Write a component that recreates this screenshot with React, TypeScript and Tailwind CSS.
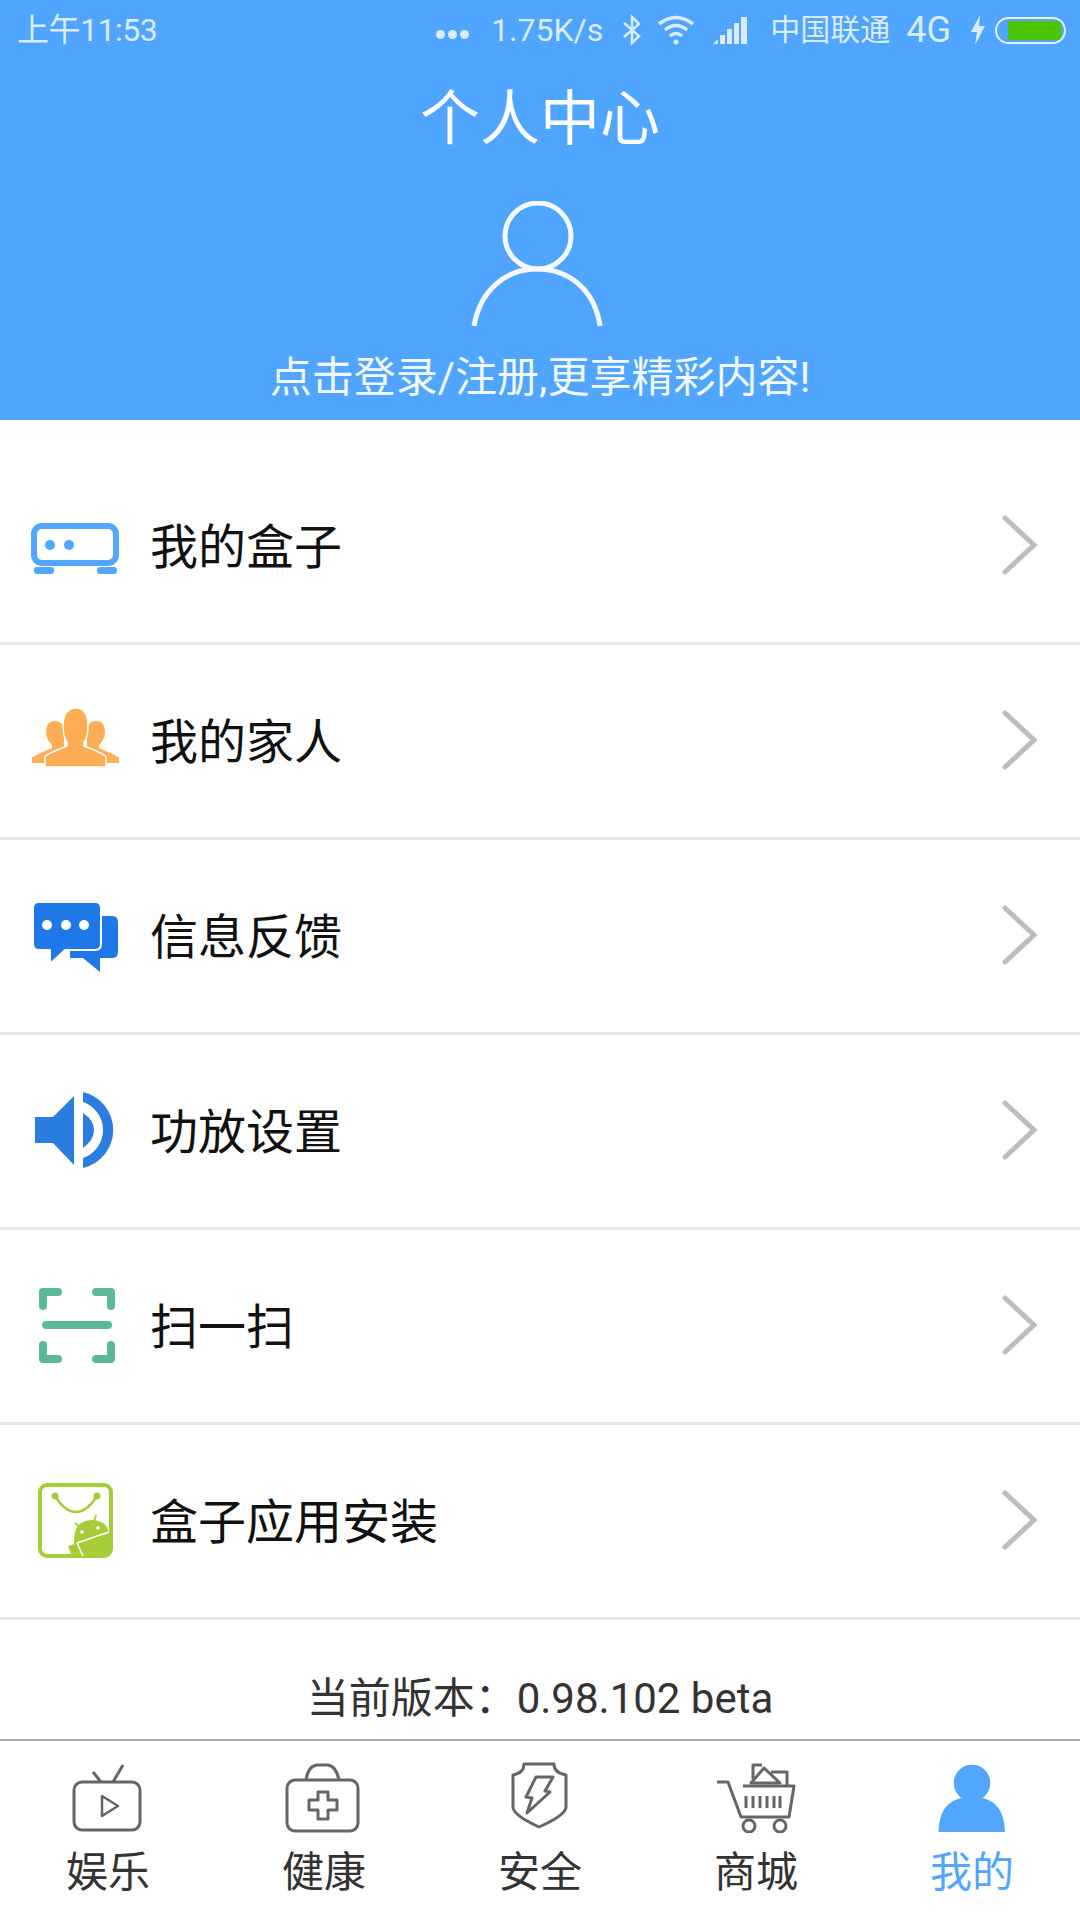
import type { ReactNode } from "react";

const BoxIcon = () => (
  <svg viewBox="0 0 100 100" className="w-[100px] h-[100px] shrink-0 mt-[2px]" fill="#52a6ff">
    <rect x="9" y="29" width="82" height="37" rx="8" fill="none" stroke="#52a6ff" strokeWidth="6" />
    <circle cx="25" cy="48" r="5" />
    <circle cx="44" cy="48" r="5" />
    <rect x="9" y="70" width="20" height="7" rx="3" />
    <rect x="72" y="70" width="20" height="7" rx="3" />
  </svg>
);

const FamilyIcon = () => (
  <svg viewBox="0 0 100 100" className="w-[100px] h-[100px] shrink-0 mt-[2px]" fill="#ffae55">
    <path d="M7 71 V66 Q8 64 27 56 V53 Q21 48 21 38 Q22 29 30 29 Q38 29 39 38 V60 L30 71 Z" />
    <path d="M94 71 V66 Q93 64 74 56 V53 Q80 48 80 38 Q79 29 71 29 Q63 29 62 38 V60 L70 71 Z" />
    <path
      d="M20 75 V65 Q21 62 42 54 V50 Q38 46 38 32 Q39 16 51 16 Q62 16 63 32 Q63 46 59 50 V54 Q80 62 81 65 V75 Z"
      stroke="#ffffff"
      strokeWidth="1.5"
    />
  </svg>
);

const ChatIcon = () => (
  <svg viewBox="0 0 100 100" className="w-[100px] h-[100px] shrink-0 mt-[2px]" fill="#1f78e8">
    <path d="M45 29 H87 Q93 29 93 35 V65 Q93 71 87 71 H75 V85 L58 71 H45 Z" />
    <path
      d="M14 15 H70 Q76 15 76 21 V57 Q76 63 70 63 H40 L25 77 V63 H14 Q8 63 8 57 V21 Q8 15 14 15 Z"
      stroke="#ffffff"
      strokeWidth="2"
    />
    <circle cx="22" cy="38" r="5" fill="#ffffff" />
    <circle cx="41" cy="38" r="5" fill="#ffffff" />
    <circle cx="59" cy="38" r="5" fill="#ffffff" />
  </svg>
);

const SpeakerIcon = () => (
  <svg viewBox="0 0 100 100" className="w-[100px] h-[100px] shrink-0 mt-[2px]" fill="#2b7de0">
    <path d="M10 35 H28 L49 14 V83 L28 61 H10 Z" />
    <path d="M58 31 Q69 38 69 48 Q69 58 58 66 Z" />
    <path d="M58 10 A39 39 0 0 1 58 86 V76 A29.6 29.6 0 0 0 58 20 Z" />
  </svg>
);

const ScanIcon = () => (
  <svg
    viewBox="0 0 100 100"
    className="w-[100px] h-[100px] shrink-0 mt-[2px]"
    fill="none"
    stroke="#5cb89a"
    strokeWidth="8"
    strokeLinecap="round"
    strokeLinejoin="round"
  >
    <path d="M18 29 V15 H33" />
    <path d="M71 15 H86 V29" />
    <path d="M18 68 V82 H33" />
    <path d="M71 82 H86 V68" />
    <path d="M21 48 H83" />
  </svg>
);

const AppIcon = () => (
  <svg viewBox="0 0 100 100" className="w-[100px] h-[100px] shrink-0 mt-[2px]">
    <path d="M49 84 V67 Q50 48 67 48 Q83 49 84 62 V84 Z" fill="#a6cc38" />
    <path d="M43 74 L53 71 L59 85 H47 Z" fill="#a6cc38" />
    <rect x="15" y="13" width="71" height="71" rx="7" fill="none" stroke="#a6cc38" strokeWidth="4" />
    <path d="M30 24 Q40 40 51 40 Q62 40 72 24" fill="none" stroke="#a6cc38" strokeWidth="2.5" />
    <circle cx="30" cy="24" r="3.5" fill="#a6cc38" />
    <circle cx="72" cy="24" r="3.5" fill="#a6cc38" />
    <path d="M50 51 L55 55 M71 43 L69 50" stroke="#a6cc38" strokeWidth="2" />
    <path d="M52 71 L84 60 M52 71 L58 84" stroke="#ffffff" strokeWidth="1.5" fill="none" />
    <circle cx="57" cy="60" r="1.8" fill="#ffffff" />
    <circle cx="73" cy="56" r="1.8" fill="#ffffff" />
  </svg>
);

const Chevron = () => (
  <svg viewBox="0 0 40 64" className="w-[40px] h-[64px] ml-auto mr-[41px]" fill="none" stroke="#bdbdbd" strokeWidth="5" strokeLinecap="round">
    <path d="M6 4 L35 31 L6 58" />
  </svg>
);

const rows: { label: string; icon: ReactNode }[] = [
  { label: "我的盒子", icon: <BoxIcon /> },
  { label: "我的家人", icon: <FamilyIcon /> },
  { label: "信息反馈", icon: <ChatIcon /> },
  { label: "功放设置", icon: <SpeakerIcon /> },
  { label: "扫一扫", icon: <ScanIcon /> },
  { label: "盒子应用安装", icon: <AppIcon /> },
];

const TvNav = () => (
  <svg viewBox="0 0 80 72" className="w-[80px] h-[72px]" fill="none" stroke="#666666" strokeWidth="3" strokeLinejoin="round">
    <rect x="6" y="21" width="66" height="48" rx="8" />
    <path d="M25 11 L33 21 M55 4 L45 21" />
    <path d="M34 35 L50 45 L34 55 Z" strokeWidth="2.5" />
  </svg>
);

const HealthNav = () => (
  <svg viewBox="0 0 80 72" className="w-[80px] h-[72px]" fill="none" stroke="#666666" strokeWidth="3" strokeLinejoin="round">
    <rect x="3" y="19" width="71" height="51" rx="8" />
    <path d="M22 19 Q24 5 33 4 H44 Q52 5 55 19" />
    <path d="M34 31 H44 V39 H53 V49 H44 V58 H34 V49 H25 V39 H34 Z" />
  </svg>
);

const SafeNav = () => (
  <svg viewBox="0 0 80 72" className="w-[80px] h-[72px]" fill="none" stroke="#666666" strokeWidth="3" strokeLinejoin="round">
    <path d="M24 3 H54 Q54 12 66 14 V46 Q66 54 39 66 Q13 54 13 46 V14 Q24 12 24 3 Z" />
    <path d="M36 16 H53 L45 30 L50 31 L27 52 L32 37 L26 36 Z" />
  </svg>
);

const ShopNav = () => (
  <svg viewBox="0 0 80 72" className="w-[80px] h-[72px]" fill="none" stroke="#666666" strokeWidth="3" strokeLinejoin="round">
    <path d="M1 21 H12 L25 56 H73 L78 25 H27" />
    <circle cx="33" cy="65" r="6" />
    <circle cx="64" cy="65" r="6" />
    <path d="M30 35 V47 M37 35 V47 M44 35 V47 M51 35 V47 M58 35 V47 M64 35 V47" />
    <path d="M37 18 V4 H46" />
    <path d="M35 22 L48 7 L64 22 Z" />
    <path d="M55 11 H71 V24" />
  </svg>
);

const MeNav = () => (
  <svg viewBox="0 0 80 72" className="w-[80px] h-[72px]" fill="#52a6ff">
    <circle cx="40" cy="22" r="18.3" />
    <path d="M6.5 71 Q7 42 29 37 Q40 43 51 37 Q72 42 73 71 Z" />
  </svg>
);

const tabs: { label: string; icon: ReactNode; active?: boolean }[] = [
  { label: "娱乐", icon: <TvNav /> },
  { label: "健康", icon: <HealthNav /> },
  { label: "安全", icon: <SafeNav /> },
  { label: "商城", icon: <ShopNav /> },
  { label: "我的", icon: <MeNav />, active: true },
];

function StatusBar() {
  return (
    <div className="h-[60px] flex items-center pl-[17px] pr-[14px] text-[#d9ecff] text-[30px] leading-none">
      <span className="text-[32px] tracking-[-0.5px]">上午11:53</span>
      <span className="ml-auto flex gap-[3px] mt-[8px]">
        <span className="w-[9px] h-[9px] rounded-full bg-[#d9ecff]" />
        <span className="w-[9px] h-[9px] rounded-full bg-[#d9ecff]" />
        <span className="w-[9px] h-[9px] rounded-full bg-[#d9ecff]" />
      </span>
      <span className="ml-[22px] text-[32px]">1.75K/s</span>
      <svg viewBox="0 0 22 32" className="w-[22px] h-[32px] ml-[18px]" fill="none" stroke="#d9ecff" strokeWidth="2.5">
        <path d="M3 9 L18 22 L11 29 V3 L18 10 L3 23" />
      </svg>
      <svg viewBox="0 0 38 32" className="w-[38px] h-[32px] ml-[14px]" fill="none" stroke="#d9ecff" strokeWidth="3.5">
        <path d="M2 10 Q19 -3 36 10" />
        <path d="M8 16 Q19 7 30 16" />
        <path d="M13 22 Q19 17 25 22" />
        <circle cx="19" cy="28" r="2.5" fill="#d9ecff" stroke="none" />
      </svg>
      <svg viewBox="0 0 38 32" className="w-[38px] h-[32px] ml-[18px]" fill="#d9ecff">
        <path d="M0 30 L5 25 V30 Z" />
        <rect x="7" y="21" width="5" height="9" />
        <rect x="14" y="15" width="5" height="15" />
        <rect x="21" y="9" width="5" height="21" />
        <rect x="28" y="3" width="6" height="27" />
      </svg>
      <span className="ml-[19px]">中国联通</span>
      <span className="ml-[16px] text-[36px]">4G</span>
      <svg viewBox="0 0 18 32" className="w-[18px] h-[32px] ml-[18px]" fill="#d9ecff">
        <path d="M11 1 L2 18 H8 L6 31 L16 12 H10 Z" />
      </svg>
      <div className="ml-[8px] w-[71px] h-[27px] rounded-full border-2 border-[#e4f1ff] flex items-center pl-[11px] pr-[3px]">
        <div className="w-full h-[19px] rounded-[3px] bg-[#4cc400]" />
      </div>
    </div>
  );
}

export default function App() {
  return (
    <div className="w-[1080px] h-[1920px] flex flex-col bg-white font-['Roboto','Noto_Sans_CJK_SC',sans-serif]">
      <div className="h-[420px] shrink-0 bg-[#4fa5ff] flex flex-col items-center">
        <div className="w-full">
          <StatusBar />
        </div>
        <div className="text-[60px] leading-[80px] mt-[20px] text-white">个人中心</div>
        <svg viewBox="0 0 134 130" className="w-[134px] h-[130px] mt-[41px] mr-[6px]" fill="none" stroke="#f4f9ff" strokeWidth="5">
          <circle cx="68" cy="35" r="33" />
          <path d="M4 125 C10 90 35 68 67 68 C100 68 125 90 130 125" />
        </svg>
        <div className="text-[42px] leading-[50px] mt-[22px] text-[#f2f8ff]">点击登录/注册,更享精彩内容!</div>
      </div>

      <div className="pt-[30px] shrink-0">
        {rows.map((row) => (
          <div key={row.label} className="h-[195px] border-b-[3px] border-[#e6e6e6] flex items-center pl-[25px]">
            {row.icon}
            <span className="ml-[25px] mt-[3px] text-[48px] leading-none text-[#111111]">{row.label}</span>
            <Chevron />
          </div>
        ))}
      </div>

      <div className="flex-1 flex items-center justify-center pt-[38px] text-[42px] leading-none text-[#333333]">
        当前版本：0.98.102 beta
      </div>

      <div className="h-[181px] shrink-0 border-t-2 border-[#aaaaaa] grid grid-cols-5">
        {tabs.map((tab) => (
          <div key={tab.label} className="flex flex-col items-center pt-[20px]">
            {tab.icon}
            <span className={`mt-[15px] text-[42px] leading-[50px] ${tab.active ? "text-[#52a6ff]" : "text-[#333333]"}`}>
              {tab.label}
            </span>
          </div>
        ))}
      </div>
    </div>
  );
}
